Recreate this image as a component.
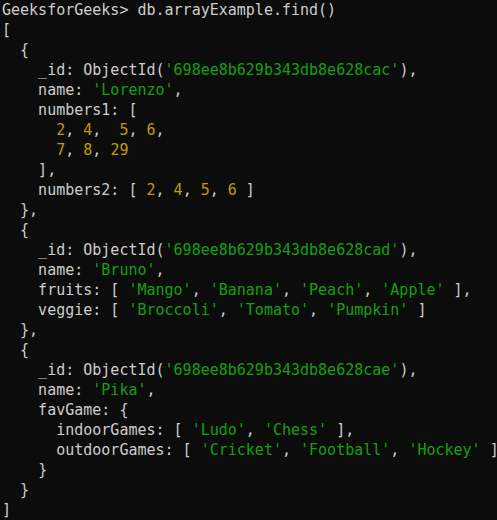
import React from "react";

// terminal colours
const G = ({ children }) => <span className="text-[#13a10e]">{children}</span>;
const Y = ({ children }) => <span className="text-[#c19c00]">{children}</span>;

const lines = [
  <>GeeksforGeeks&gt; db.arrayExample.find()</>,
  <>[</>,
  <>  {"{"}</>,
  <>    _id: ObjectId(<G>'698ee8b629b343db8e628cac'</G>),</>,
  <>    name: <G>'Lorenzo'</G>,</>,
  <>    numbers1: [</>,
  <>      <Y>2</Y>, <Y>4</Y>,  <Y>5</Y>, <Y>6</Y>,</>,
  <>      <Y>7</Y>, <Y>8</Y>, <Y>29</Y></>,
  <>    ],</>,
  <>    numbers2: [ <Y>2</Y>, <Y>4</Y>, <Y>5</Y>, <Y>6</Y> ]</>,
  <>  {"},"}</>,
  <>  {"{"}</>,
  <>    _id: ObjectId(<G>'698ee8b629b343db8e628cad'</G>),</>,
  <>    name: <G>'Bruno'</G>,</>,
  <>    fruits: [ <G>'Mango'</G>, <G>'Banana'</G>, <G>'Peach'</G>, <G>'Apple'</G> ],</>,
  <>    veggie: [ <G>'Broccoli'</G>, <G>'Tomato'</G>, <G>'Pumpkin'</G> ]</>,
  <>  {"},"}</>,
  <>  {"{"}</>,
  <>    _id: ObjectId(<G>'698ee8b629b343db8e628cae'</G>),</>,
  <>    name: <G>'Pika'</G>,</>,
  <>    favGame: {"{"}</>,
  <>      indoorGames: [ <G>'Ludo'</G>, <G>'Chess'</G> ],</>,
  <>      outdoorGames: [ <G>'Cricket'</G>, <G>'Football'</G>, <G>'Hockey'</G> ]</>,
  <>    {"}"}</>,
  <>  {"}"}</>,
  <>]</>,
];

export default function App() {
  return (
    <div className="w-[497px] h-[520px] overflow-hidden bg-[#0c0c0c] text-[#cccccc] pl-[2px] font-['DejaVu_Sans_Mono',monospace] text-[15px] leading-[20px]">
      {lines.map((l, i) => (
        <div key={i} className="whitespace-pre">
          {l}
        </div>
      ))}
    </div>
  );
}
